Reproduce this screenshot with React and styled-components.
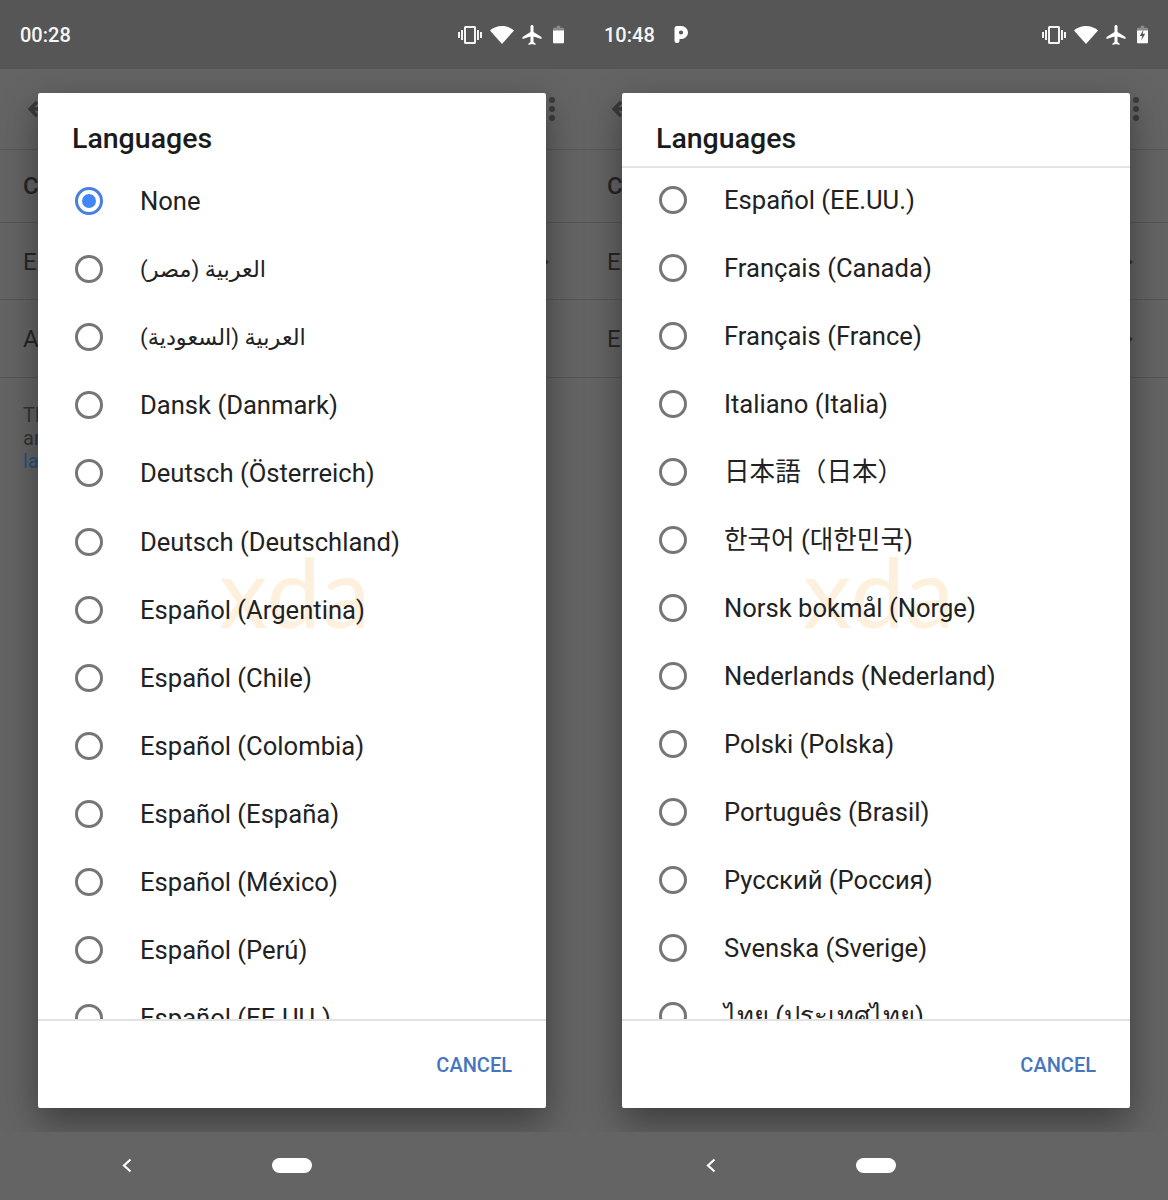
import styled, { createGlobalStyle } from "styled-components";

const GlobalStyle = createGlobalStyle`
  html, body {
    margin: 0;
    padding: 0;
    background: #646464;
  }
  * {
    box-sizing: border-box;
  }
`;

const Page = styled.div`
  display: grid;
  grid-template-columns: 584px 584px;
  width: 1168px;
  height: 1200px;
  overflow: hidden;
  font-family: Roboto, "Noto Sans", sans-serif;
`;

const Phone = styled.div`
  position: relative;
  display: flex;
  flex-direction: column;
  height: 1200px;
  background: #646464;
`;

const StatusBar = styled.div`
  position: relative;
  z-index: 2;
  display: flex;
  align-items: center;
  height: 69px;
  padding: 0 20px;
  background: #565656;
  color: #f6f6f6;
`;

const Time = styled.span`
  font-size: 20px;
  font-weight: 500;
`;

const ParkSlot = styled.span`
  margin-left: 19px;
`;

const StatusIcons = styled.div`
  display: flex;
  align-items: center;
  margin-left: auto;
  gap: 8px;
`;

const Svg = styled.svg`
  display: block;
  flex: none;
`;

const BatterySvg = styled(Svg)`
  margin-left: 3px;
`;

const AppBar = styled.div`
  display: flex;
  align-items: center;
  justify-content: space-between;
  height: 81px;
  padding: 0 28px 0 27px;
  border-bottom: 1px solid #585858;
  color: #3a3a3a;
`;

const SettingRow = styled.div`
  display: flex;
  align-items: center;
  justify-content: space-between;
  height: ${(p) => p.$height}px;
  padding: ${(p) => (p.$bold ? 0 : 1)}px 34px 0 23px;
  border-bottom: 1px solid #555;
  color: #262626;
  font-size: 24px;
  font-weight: ${(p) => (p.$bold ? 500 : 400)};
`;

const Note = styled.div`
  padding: 26px 0 0 23px;
  color: #333;
  font-size: 20px;
  line-height: 23px;
`;

const NoteLink = styled.div`
  color: #2b4f80;
`;

const NavBar = styled.div`
  position: relative;
  z-index: 2;
  display: flex;
  align-items: center;
  height: 68px;
  margin-top: auto;
  padding: 0 0 1px 121px;
  background: #646464;
`;

const HomePill = styled.div`
  width: 40px;
  height: 15px;
  margin-left: 140px;
  border-radius: 8px;
  background: #fff;
`;

const Dialog = styled.div`
  position: absolute;
  z-index: 1;
  top: 93px;
  left: 38px;
  display: flex;
  flex-direction: column;
  width: 508px;
  height: 1015px;
  border-radius: 2px;
  background: #fff;
  box-shadow: 0 14px 36px rgba(0, 0, 0, 0.4);
`;

const Title = styled.h2`
  flex: none;
  height: ${(p) => (p.$divided ? 75 : 74)}px;
  margin: 0;
  padding: 27px 34px 0;
  border-bottom: ${(p) => (p.$divided ? "2px solid #e4e4e4" : "0")};
  color: #1b1b1b;
  font-size: 28.5px;
  font-weight: 500;
  line-height: 38px;
`;

const List = styled.div`
  position: relative;
  z-index: 1;
  flex: 1;
  min-height: 0;
  overflow: hidden;
  margin-top: ${(p) => p.$offset}px;
`;

const Row = styled.div`
  display: flex;
  align-items: center;
  gap: 37px;
  height: ${(p) => p.$pitch}px;
  padding-left: 37px;
`;

const Radio = styled.span`
  display: flex;
  align-items: center;
  justify-content: center;
  flex: none;
  width: 28px;
  height: 28px;
  border: 3px solid ${(p) => (p.$checked ? "#4a80dc" : "#767676")};
  border-radius: 50%;
`;

const RadioDot = styled.span`
  width: 14px;
  height: 14px;
  border-radius: 50%;
  background: #4285f4;
`;

const Label = styled.span`
  color: #222;
  font-family: Roboto, "DejaVu Sans", "Noto Sans CJK JP", "Noto Sans CJK KR", "Noto Sans", sans-serif;
  font-size: ${(p) => (p.$arabic ? 22.4 : 25.6)}px;
  line-height: 30px;
  white-space: nowrap;
`;

const Footer = styled.div`
  display: flex;
  align-items: center;
  justify-content: flex-end;
  flex: none;
  height: 89px;
  padding: 0 34px 0 0;
  border-top: 2px solid #e2e2e2;
`;

const Cancel = styled.span`
  color: #4675bd;
  font-size: 20px;
  font-weight: 500;
`;

const Watermark = styled.span`
  position: absolute;
  left: 181px;
  top: 449px;
  color: #fdf0dc;
  font-family: Lato, sans-serif;
  font-size: 97px;
  font-weight: 400;
  letter-spacing: 1px;
  line-height: 97px;
  pointer-events: none;
`;

const Vibrate = () => (
  <Svg width="24" height="24" viewBox="0 0 24 24" fill="#f4f4f4">
    <path d="M0 15h2V9H0v6zm3 2h2V7H3v10zm19-8v6h2V9h-2zm-3 8h2V7h-2v10zM16.5 3h-9C6.67 3 6 3.67 6 4.5v15c0 .83.67 1.5 1.5 1.5h9c.83 0 1.5-.67 1.5-1.5v-15c0-.83-.67-1.5-1.5-1.5zM16 19H8V5h8v14z" />
  </Svg>
);

const Wifi = () => (
  <Svg width="24" height="20" viewBox="0 0 24 20" fill="#fff">
    <path d="M0 5.500C3.200 2.600 7.400 1 12 1s8.800 1.600 12 4.500L12 19z" />
  </Svg>
);

const Plane = () => (
  <Svg width="20" height="20" viewBox="2 2 19 20" fill="#fff">
    <path d="M21 16v-2l-8-5V3.500c0-.83-.67-1.500-1.500-1.500S10 2.670 10 3.500V9l-8 5v2l8-2.500V19l-2 1.500V22l3.500-1 3.500 1v-1.500L13 19v-5.500l8 2.500z" />
  </Svg>
);

const Battery = ({ charging }) => (
  <BatterySvg width="11" height="19" viewBox="0 0 12 19">
    <path d="M4 0h4v2h3a1 1 0 0 1 1 1v15a1 1 0 0 1-1 1H1a1 1 0 0 1-1-1V3a1 1 0 0 1 1-1h3z" fill="#8a8a8a" />
    <path d="M0 5h12v13a1 1 0 0 1-1 1H1a1 1 0 0 1-1-1z" fill="#fbfbfb" />
    {charging && <path d="M7.200 4 3 11h2.600L4.600 16 9 8.800H6.200z" fill="#555" />}
  </BatterySvg>
);

const ParkIcon = () => (
  <Svg width="14" height="17" viewBox="0 0 14 17">
    <path
      fillRule="evenodd"
      d="M2.500 0H7.500A6.500 6.500 0 0 1 7.500 13H5.500V14.500A2.500 2.500 0 0 1 .5 14.500V2.500A2.500 2.500 0 0 1 2.500 0zM7 4.400A2.100 2.100 0 0 0 7 8.600 2.100 2.100 0 0 0 7 4.400z"
      fill="#fff"
    />
  </Svg>
);

const BackArrow = () => (
  <Svg width="20" height="20" viewBox="0 0 20 20" fill="none" stroke="#3a3a3a" strokeWidth="3.500">
    <path d="M10 3 3 10l7 7M3 10h16" />
  </Svg>
);

const MoreDots = () => (
  <Svg width="8" height="26" viewBox="0 0 8 26" fill="#3c3c3c">
    <circle cx="4" cy="4" r="3" />
    <circle cx="4" cy="13" r="3" />
    <circle cx="4" cy="22" r="3" />
  </Svg>
);

const Chevron = () => (
  <Svg width="8" height="12" viewBox="0 0 8 12" fill="#333">
    <path d="M1 1l6 5-6 5z" />
  </Svg>
);

const NavBack = () => (
  <Svg width="11" height="15" viewBox="0 0 11 15" fill="none" stroke="#fff" strokeWidth="2.200">
    <path d="M9.500 1.500 3 7.500l6.500 6" />
  </Svg>
);

const phones = [
  {
    time: "00:28",
    parked: false,
    settings: [
      { text: "Cl", height: 73 },
      { text: "E", height: 77, chevron: true },
      { text: "A", height: 78 },
    ],
    note: true,
    divided: false,
    offset: 0,
    pitch: 68.1,
    checked: "None",
    languages: [
      { name: "None" },
      { name: "العربية (مصر)", arabic: true },
      { name: "العربية (السعودية)", arabic: true },
      { name: "Dansk (Danmark)" },
      { name: "Deutsch (Österreich)" },
      { name: "Deutsch (Deutschland)" },
      { name: "Español (Argentina)" },
      { name: "Español (Chile)" },
      { name: "Español (Colombia)" },
      { name: "Español (España)" },
      { name: "Español (México)" },
      { name: "Español (Perú)" },
      { name: "Español (EE.UU.)" },
    ],
  },
  {
    time: "10:48",
    parked: true,
    settings: [
      { text: "Cl", height: 73 },
      { text: "E", height: 77, chevron: true },
      { text: "E", height: 78, chevron: true },
    ],
    note: false,
    divided: true,
    offset: -2,
    pitch: 68,
    languages: [
      { name: "Español (EE.UU.)" },
      { name: "Français (Canada)" },
      { name: "Français (France)" },
      { name: "Italiano (Italia)" },
      { name: "日本語（日本）" },
      { name: "한국어 (대한민국)" },
      { name: "Norsk bokmål (Norge)" },
      { name: "Nederlands (Nederland)" },
      { name: "Polski (Polska)" },
      { name: "Português (Brasil)" },
      { name: "Русский (Россия)" },
      { name: "Svenska (Sverige)" },
      { name: "ไทย (ประเทศไทย)" },
    ],
  },
];

const PhoneScreen = ({ phone }) => (
  <Phone>
    <StatusBar>
      <Time>{phone.time}</Time>
      {phone.parked && (
        <ParkSlot>
          <ParkIcon />
        </ParkSlot>
      )}
      <StatusIcons>
        <Vibrate />
        <Wifi />
        <Plane />
        <Battery charging={phone.parked} />
      </StatusIcons>
    </StatusBar>
    <AppBar>
      <BackArrow />
      <MoreDots />
    </AppBar>
    {phone.settings.map((row, i) => (
      <SettingRow key={i} $height={row.height} $bold={i === 0}>
        {row.text}
        {row.chevron && <Chevron />}
      </SettingRow>
    ))}
    {phone.note && (
      <Note>
        Tl
        <br />
        ar
        <NoteLink>la</NoteLink>
      </Note>
    )}
    <NavBar>
      <NavBack />
      <HomePill />
    </NavBar>
    <Dialog>
      <Title $divided={phone.divided}>Languages</Title>
      <Watermark>xda</Watermark>
      <List $offset={phone.offset}>
        {phone.languages.map((lang) => (
          <Row key={lang.name} $pitch={phone.pitch}>
            <Radio $checked={lang.name === phone.checked}>
              {lang.name === phone.checked && <RadioDot />}
            </Radio>
            <Label $arabic={lang.arabic}>{lang.name}</Label>
          </Row>
        ))}
      </List>
      <Footer>
        <Cancel>CANCEL</Cancel>
      </Footer>
    </Dialog>
  </Phone>
);

export default function App() {
  return (
    <Page>
      <GlobalStyle />
      {phones.map((phone) => (
        <PhoneScreen key={phone.time} phone={phone} />
      ))}
    </Page>
  );
}
